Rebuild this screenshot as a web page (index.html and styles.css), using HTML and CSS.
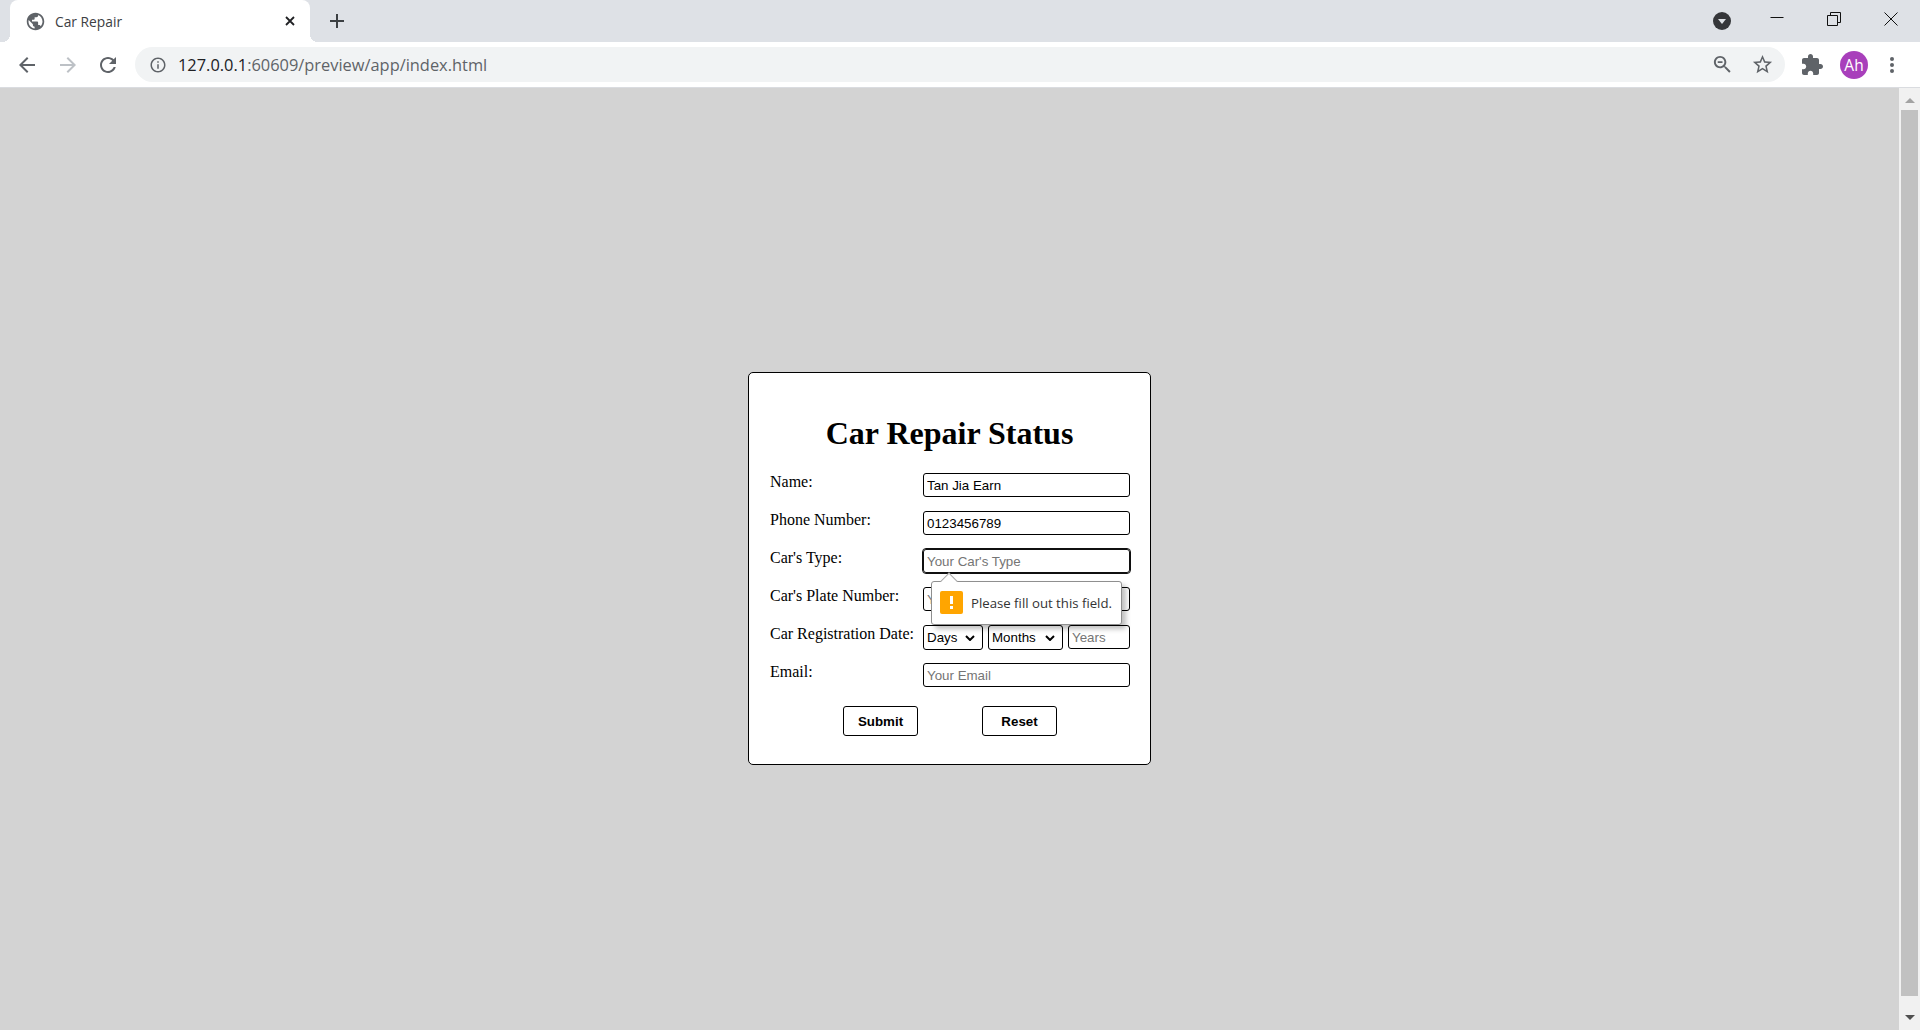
FILE: index.html
```html
<!DOCTYPE html>
<html lang="en">
<head>
    <meta charset="UTF-8">
    <title>Car Repair</title>
    <link rel="stylesheet" href="styles.css">
</head>
<body>
    <div class="tabstrip">
        <div class="tab">
            <svg class="favicon" viewBox="0 0 24 24"><path d="M12 2C6.48 2 2 6.48 2 12s4.48 10 10 10 10-4.48 10-10S17.52 2 12 2zm-1 17.93c-3.95-.49-7-3.85-7-7.93 0-.62.08-1.21.21-1.79L9 15v1c0 1.1.9 2 2 2v1.93zm6.9-2.54c-.26-.81-1-1.39-1.9-1.39h-1v-3c0-.55-.45-1-1-1H8v-2h2c.55 0 1-.45 1-1V7h2c1.1 0 2-.9 2-2v-.41c2.93 1.19 5 4.06 5 7.41 0 2.08-.8 3.97-2.1 5.39z"/></svg>
            <span class="tab-title">Car Repair</span>
            <svg class="tab-close" viewBox="0 0 10 10"><path d="M1 1l8 8M9 1l-8 8"/></svg>
        </div>
        <svg class="new-tab" viewBox="0 0 14 14"><path d="M7 0v14M0 7h14"/></svg>
        <div class="tab-search">
            <svg viewBox="0 0 18 18"><circle cx="9" cy="9" r="9"/><path class="tab-search-arrow" d="M5 7h8l-4 5z"/></svg>
        </div>
        <div class="win-btn">
            <svg viewBox="0 0 14 14"><path d="M.5 5.5h13"/></svg>
        </div>
        <div class="win-btn">
            <svg viewBox="0 0 14 14"><path d="M.5 3.5h10v10H.5zM3.5 3.5v-3h10v10h-3"/></svg>
        </div>
        <div class="win-btn win-close">
            <svg viewBox="0 0 14 14"><path d="M.5.5l13 13M13.5.5l-13 13"/></svg>
        </div>
    </div>

    <div class="toolbar">
        <div class="tool">
            <svg viewBox="0 0 24 24"><path d="M20 11H7.83l5.59-5.59L12 4l-8 8 8 8 1.41-1.41L7.83 13H20v-2z"/></svg>
        </div>
        <div class="tool tool-off">
            <svg viewBox="0 0 24 24"><path d="M12 4l-1.41 1.41L16.17 11H4v2h12.17l-5.58 5.59L12 20l8-8z"/></svg>
        </div>
        <div class="tool">
            <svg viewBox="0 0 24 24"><path d="M17.65 6.35C16.2 4.9 14.21 4 12 4c-4.42 0-7.99 3.58-7.99 8s3.57 8 7.99 8c3.73 0 6.84-2.55 7.73-6h-2.08c-.82 2.33-3.04 4-5.65 4-3.31 0-6-2.69-6-6s2.69-6 6-6c1.66 0 3.14.69 4.22 1.78L13 11h7V4l-2.35 2.35z"/></svg>
        </div>
        <div class="omnibox">
            <svg class="omni-info" viewBox="0 0 24 24"><path d="M11 7h2v2h-2zm0 4h2v6h-2zm1-9C6.48 2 2 6.48 2 12s4.48 10 10 10 10-4.48 10-10S17.52 2 12 2zm0 18c-4.41 0-8-3.59-8-8s3.59-8 8-8 8 3.59 8 8-3.59 8-8 8z"/></svg>
            <span class="url"><span class="url-host">127.0.0.1</span>:60609/preview/app/index.html</span>
            <svg class="omni-zoom" viewBox="0 0 24 24"><path d="M15.5 14h-.79l-.28-.27C15.41 12.59 16 11.11 16 9.5 16 5.91 13.09 3 9.5 3S3 5.91 3 9.5 5.91 16 9.5 16c1.61 0 3.09-.59 4.23-1.57l.27.28v.79l5 4.99L20.49 19l-4.99-5zm-6 0C7.01 14 5 11.99 5 9.5S7.01 5 9.5 5 14 7.01 14 9.5 11.99 14 9.5 14zM7 8.5h5v2H7z"/></svg>
            <svg class="omni-star" viewBox="0 0 24 24"><path d="M22 9.24l-7.19-.62L12 2 9.19 8.63 2 9.24l5.46 4.73L5.82 21 12 17.27 18.18 21l-1.63-7.03L22 9.24zM12 15.4l-3.76 2.27 1-4.28-3.32-2.88 4.38-.38L12 6.1l1.71 4.04 4.38.38-3.32 2.88 1 4.28L12 15.4z"/></svg>
        </div>
        <div class="tool tool-ext">
            <svg viewBox="0 0 24 24"><path d="M20.5 11H19V7c0-1.1-.9-2-2-2h-4V3.5C13 2.12 11.88 1 10.5 1S8 2.12 8 3.5V5H4c-1.1 0-1.99.9-1.99 2v3.8H3.5c1.49 0 2.7 1.21 2.7 2.7s-1.21 2.7-2.7 2.7H2V20c0 1.1.9 2 2 2h3.8v-1.5c0-1.49 1.21-2.7 2.7-2.7 1.49 0 2.7 1.21 2.7 2.7V22H17c1.1 0 2-.9 2-2v-4h1.5c1.38 0 2.5-1.12 2.5-2.5S21.88 11 20.5 11z"/></svg>
        </div>
        <div class="avatar">Ah</div>
        <div class="tool tool-menu">
            <svg viewBox="0 0 4 16"><circle cx="2" cy="2" r="2"/><circle cx="2" cy="8" r="2"/><circle cx="2" cy="14" r="2"/></svg>
        </div>
    </div>

    <div class="viewport">
        <div class="page">
            <form class="card">
                <h1>Car Repair Status</h1>

                <div class="row">
                    <label>Name:</label>
                    <input class="field" type="text" value="Tan Jia Earn">
                </div>
                <div class="row">
                    <label>Phone Number:</label>
                    <input class="field" type="text" value="0123456789">
                </div>
                <div class="row">
                    <label>Car's Type:</label>
                    <div class="has-bubble">
                        <input class="field field-focus" type="text" placeholder="Your Car's Type">
                        <div class="bubble">
                            <svg class="bubble-icon" viewBox="0 0 23 23"><rect width="23" height="23" rx="2"/><path class="bubble-mark" d="M10 5h3v8h-3zM10 15h3v3h-3z"/></svg>
                            <span>Please fill out this field.</span>
                        </div>
                    </div>
                </div>
                <div class="row">
                    <label>Car's Plate Number:</label>
                    <input class="field" type="text" placeholder="Your Car's Plate Number">
                </div>
                <div class="row">
                    <label>Car Registration Date:</label>
                    <div class="date-fields">
                        <div class="select-wrap">
                            <select class="days"><option>Days</option></select>
                            <svg class="chevron" viewBox="0 0 10 6"><path d="M1 1l4 4 4-4"/></svg>
                        </div>
                        <div class="select-wrap">
                            <select class="months"><option>Months</option></select>
                            <svg class="chevron" viewBox="0 0 10 6"><path d="M1 1l4 4 4-4"/></svg>
                        </div>
                        <input class="field years" type="text" placeholder="Years">
                    </div>
                </div>
                <div class="row">
                    <label>Email:</label>
                    <input class="field" type="text" placeholder="Your Email">
                </div>

                <div class="actions">
                    <button type="button">Submit</button>
                    <button type="button">Reset</button>
                </div>
            </form>
        </div>
        <div class="scrollbar">
            <div class="arrow-up"></div>
            <div class="thumb"></div>
            <div class="arrow-down"></div>
        </div>
    </div>
</body>
</html>
```

FILE: styles.css
```css
body {
    margin: 0;
    height: 100vh;
    overflow: hidden;
    display: flex;
    flex-direction: column;
    font-family: "Liberation Serif", serif;
    background-color: #d3d3d3;
}

/* browser tabs */
.tabstrip {
    height: 42px;
    flex-shrink: 0;
    display: flex;
    align-items: center;
    padding-left: 10px;
    background-color: #dee1e6;
}

.tab {
    position: relative;
    width: 300px;
    height: 42px;
    box-sizing: border-box;
    display: flex;
    align-items: center;
    padding-left: 15px;
    background-color: white;
    border-radius: 8px 8px 0 0;
}

.tab::before,
.tab::after {
    content: "";
    position: absolute;
    bottom: 0;
    width: 8px;
    height: 8px;
}

.tab::before {
    left: -8px;
    background: radial-gradient(circle at 0 0, transparent 8px, white 8px);
}

.tab::after {
    right: -8px;
    background: radial-gradient(circle at 100% 0, transparent 8px, white 8px);
}

.favicon {
    width: 21px;
    height: 21px;
    fill: #5f6368;
}

.tab-title {
    margin-left: 9px;
    font: 13.8px "Open Sans", sans-serif;
    color: #3c4043;
}

.tab-close {
    position: absolute;
    left: 275px;
    top: 16px;
    width: 10px;
    height: 10px;
    stroke: #202124;
    stroke-width: 1.8;
}

.new-tab {
    width: 14px;
    height: 14px;
    margin-left: 20px;
    stroke: #3c4043;
    stroke-width: 2;
}

.tab-search {
    margin-left: auto;
    margin-right: 17px;
    width: 18px;
    height: 18px;
}

.tab-search svg {
    display: block;
    width: 18px;
    height: 18px;
    fill: #35363a;
}

.tab-search .tab-search-arrow {
    fill: #dee1e6;
}

.win-btn {
    width: 57px;
    height: 42px;
    padding-top: 12px;
    box-sizing: border-box;
    display: flex;
    justify-content: center;
    align-items: flex-start;
}

.win-btn svg {
    width: 14px;
    height: 14px;
    fill: none;
    stroke: #111;
    stroke-width: 1;
}

.win-close {
    width: 58px;
}

/* address bar row */
.toolbar {
    height: 45px;
    flex-shrink: 0;
    display: flex;
    align-items: center;
    padding-left: 7px;
    background-color: white;
    border-bottom: 1px solid #dadce0;
}

.tool {
    width: 40px;
    height: 40px;
    display: flex;
    align-items: center;
    justify-content: center;
}

.tool svg {
    width: 24px;
    height: 24px;
    fill: #5f6368;
}

.tool-off {
    margin-left: 1px;
}

.tool-off svg {
    fill: #bdc1c6;
}

.omnibox {
    position: relative;
    width: 1650px;
    height: 35px;
    margin-left: 7px;
    display: flex;
    align-items: center;
    background-color: #f1f3f4;
    border-radius: 18px;
}

.omni-info {
    width: 18px;
    height: 18px;
    margin-left: 14px;
    fill: #5f6368;
}

.url {
    margin-left: 11px;
    font: 16.4px "Open Sans", sans-serif;
    color: #5f6368;
}

.url-host {
    color: #202124;
}

.omni-zoom,
.omni-star {
    position: absolute;
    top: 6px;
    width: 23px;
    height: 23px;
    fill: #5f6368;
}

.omni-zoom {
    left: 1576px;
}

.omni-star {
    left: 1616px;
}

.tool-ext {
    margin-left: 7px;
}

.avatar {
    width: 28px;
    height: 28px;
    margin-left: 8px;
    border-radius: 50%;
    background-color: #a83fbb;
    color: white;
    font: 15.5px/28px "Open Sans", sans-serif;
    text-align: center;
}

.tool-menu {
    margin-left: 4px;
}

.tool-menu svg {
    width: 4px;
    height: 16px;
}

/* page area */
.viewport {
    flex: 1;
    display: flex;
    min-height: 0;
}

.page {
    flex: 1;
    display: flex;
    justify-content: center;
    align-items: flex-start;
    padding-top: 284px;
}

.card {
    width: 403px;
    box-sizing: border-box;
    padding: 20px 20px 28px 21px;
    background-color: white;
    border: 1px solid black;
    border-radius: 5px;
}

h1 {
    margin: 22.4px 1px 20.5px 0;
    font-size: 32px;
    text-align: center;
}

.row {
    display: grid;
    grid-template-columns: 153px 207px;
    margin-bottom: 14px;
    font-size: 16px;
}

.field {
    width: 207px;
    height: 24px;
    box-sizing: border-box;
    padding: 2px 3px 0;
    font: 13.33px "Liberation Sans", sans-serif;
    color: black;
    background-color: white;
    border: 1px solid black;
    border-radius: 3px;
}

.field-focus {
    outline: 1px solid #101010;
    border-color: #101010;
}

.has-bubble {
    position: relative;
    height: 24px;
}

.bubble {
    position: absolute;
    z-index: 2;
    left: 8px;
    top: 32px;
    width: 191px;
    height: 44px;
    box-sizing: border-box;
    display: flex;
    align-items: center;
    padding-left: 8px;
    font: 13.2px "Open Sans", sans-serif;
    color: #333;
    background-color: white;
    border: 1px solid #8f8f8f;
    border-radius: 3px;
    box-shadow: 4px 4px 5px rgba(0, 0, 0, 0.25);
}

/* little arrow on top of the bubble */
.bubble::before {
    content: "";
    position: absolute;
    left: 11px;
    top: -7px;
    width: 11px;
    height: 11px;
    background-color: white;
    border-top: 1px solid #a8a8a8;
    border-left: 1px solid #a8a8a8;
    transform: rotate(45deg);
}

.bubble-icon {
    width: 23px;
    height: 23px;
    margin-right: 8px;
    flex-shrink: 0;
    fill: #ffa500;
}

.bubble-icon .bubble-mark {
    fill: white;
}

.date-fields {
    display: flex;
    align-items: flex-start;
    gap: 5px;
    height: 24px;
}

.select-wrap {
    position: relative;
    height: 25px;
}

select {
    display: block;
    height: 25px;
    box-sizing: border-box;
    padding: 1px 0 0 3px;
    appearance: none;
    font: 13.33px "Liberation Sans", sans-serif;
    color: black;
    background-color: white;
    border: 1px solid black;
    border-radius: 3px;
}

.chevron {
    position: absolute;
    right: 8px;
    top: 10px;
    width: 10px;
    height: 6px;
    fill: none;
    stroke: black;
    stroke-width: 2;
}

.days {
    width: 60px;
}

.months {
    width: 75px;
}

.field.years {
    width: 62px;
}

.actions {
    display: flex;
    justify-content: center;
    gap: 64px;
    margin-top: 19px;
}

button {
    width: 75px;
    height: 30px;
    padding: 2px 0 0;
    font: bold 13.33px "Liberation Sans", sans-serif;
    color: black;
    background-color: white;
    border: 1px solid black;
    border-radius: 3px;
}

/* fake scrollbar of the window */
.scrollbar {
    width: 21px;
    position: relative;
    background-color: #f1f1f1;
}

.thumb {
    position: absolute;
    left: 2px;
    top: 22px;
    width: 17px;
    height: 886px;
    background-color: #c1c1c1;
}

.arrow-up,
.arrow-down {
    position: absolute;
    left: 6px;
    width: 0;
    height: 0;
    border-left: 5px solid transparent;
    border-right: 5px solid transparent;
}

.arrow-up {
    top: 10px;
    border-bottom: 5px solid #a3a3a3;
}

.arrow-down {
    bottom: 10px;
    border-top: 5px solid #505050;
}
```
